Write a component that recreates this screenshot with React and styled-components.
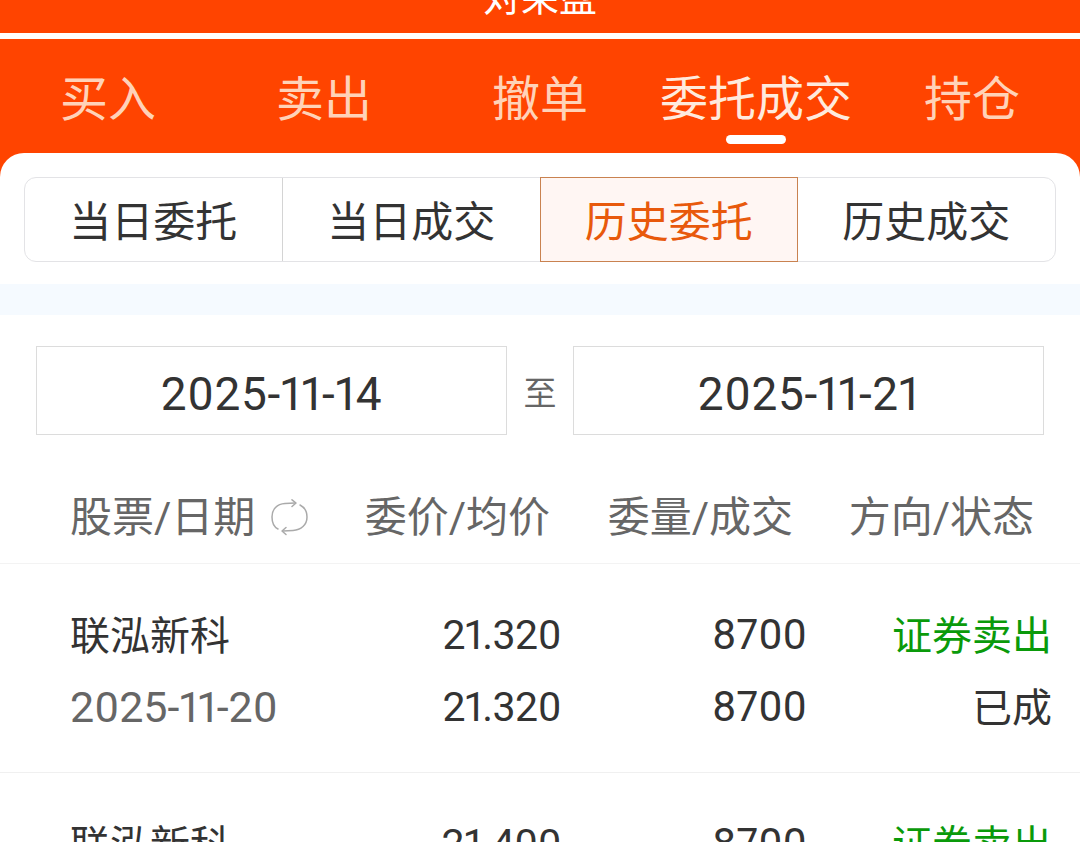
import React from "react";
import styled, { createGlobalStyle } from "styled-components";

const Global = createGlobalStyle`
  html, body { margin: 0; padding: 0; background: #fff; }
  body { width: 1080px; height: 842px; overflow: hidden; font-family: Roboto, "Noto Sans CJK SC", sans-serif; font-variant-numeric: proportional-nums; }
`;
const Page = styled.div`width:1080px;height:842px;overflow:hidden;background:#fff;`;
const TopBar = styled.div`
  height: 33px; background: #ff4400; overflow: hidden; display: flex; justify-content: center; align-items: flex-end;
`;
const TopTitle = styled.div`color:#fff;font-size:38px;line-height:50px;margin-bottom:10px;flex:none;`;
const Stripe = styled.div`height: 6px; background: #fff;`;
const Head = styled.div`background:#ff4400;height:114px;display:flex;`;
const Tab = styled.div`
  position: relative; width: 216px; text-align: center; font-size: 48px; line-height: 60px; padding-top: 31px;
  color: ${p => p.$active ? "#ffeadd" : "#ffd2b8"};
  flex: none;
`;
const TabMark = styled.span`
  position:absolute; left: 78px; top: 96px; width: 60px; height: 9px; border-radius: 5px; background:#fff;
`;
const Panel = styled.div`
  background:#fff; border-radius: 24px 24px 0 0; position: relative; padding-top: 24px;
`;
const HeadBg = styled.div`background:#ff4400;`;
const Seg = styled.div`
  margin: 0 24px; height: 85px; box-sizing: border-box; border: 1px solid #e3e3e6; border-radius: 12px; display: grid; grid-template-columns: repeat(4, 1fr);
`;
const SegItem = styled.div`
  display:flex;align-items:center;justify-content:center;font-size:42px;padding-bottom:2px;
  color: ${p => p.$active ? "#e8590c" : "#333"};
  background: ${p => p.$active ? "#fff6f3" : "transparent"};
  box-shadow: ${p => p.$active ? "inset 0 0 0 1px #c98250" : "none"};
  border-right: ${p => p.$divider ? "1px solid #d4d4d4" : "none"};
  margin: ${p => p.$active ? "-1px 0" : "0"};
`;
const Band = styled.div`height: 31px; background:#f5faff; margin-top: 22px;`;
const DateRow = styled.div`display:flex;align-items:center;padding:0 36px;margin-top:31px;`;
const DateBox = styled.div`
  width:471px;height:89px;box-sizing:border-box;border:1px solid #dcdcdc;display:flex;align-items:center;justify-content:center;
  padding-top: 6px; font-size:46px;letter-spacing:.6px;color:#333;flex:none;
`;
const To = styled.div`flex:1;text-align:center;font-size:33px;color:#666;`;
const Grid = styled.div`display:grid;grid-template-columns:70px 301px 190px 246px 245px 28px;`;
const TableHead = styled(Grid)`
  height: 129px; box-sizing:border-box; padding-top: 37px; border-bottom: 1px solid #f3f3f3;
  font-size: 42px; line-height: 62px; color:#666;
`;
const HeadCell = styled.div`
  grid-column: ${p => p.$col}; white-space: nowrap; display:flex; align-items:center;
  justify-content: ${p => p.$left ? "flex-start" : "flex-end"}; margin-right: ${p => p.$mr || 0}px;
`;
const RefreshSvg = styled.svg`margin-left: 16px; color:#aaa; flex:none;`;
const Row = styled(Grid)`
  height: 209px; box-sizing:border-box; padding-top: 36px; border-bottom:1px solid #f0f0f0;
  grid-template-rows: 72px 72px; align-content:start;
`;
const Cell = styled.div`
  grid-column: ${p => p.$col}; font-size: 40px; line-height:73px; white-space:nowrap;
  text-align: right;
  color: ${p => p.$color || "#333"};
`;
const Name = styled(Cell)`text-align:left;`;
const RowDate = styled(Cell)`text-align:left;font-size:43px;line-height:70px;color:#666;`;
const Price = styled(Cell)`font-size:41px;letter-spacing:-.5px;line-height:70px;`;
const Qty = styled(Cell)`font-size:42px;line-height:70px;`;

const tabs = ["买入","卖出","撤单","委托成交","持仓"];
const segs = ["当日委托","当日成交","历史委托","历史成交"];
const rows = [
  { name:"联泓新科", date:"2025-11-20", p1:"21.320", p2:"21.320", q1:"8700", q2:"8700" },
  { name:"联泓新科", date:"2025-11-20", p1:"21.400", p2:"21.400", q1:"8700", q2:"8700" },
];

export default function App(){
  return <Page>
    <Global/>
    <TopBar><TopTitle>对呆盘</TopTitle></TopBar>
    <Stripe/>
    <HeadBg>
      <Head>{tabs.map((t,i)=><Tab key={t} $active={i===3}>{t}{i===3&&<TabMark/>}</Tab>)}</Head>
      <Panel>
        <Seg>{segs.map((s,i)=><SegItem key={s} $active={i===2} $divider={i===0}>{s}</SegItem>)}</Seg>
        <Band/>
        <DateRow><DateBox>2025-11-14</DateBox><To>至</To><DateBox>2025-11-21</DateBox></DateRow>
        <TableHead>
          <HeadCell $col={2} $left>股票/日期
            <RefreshSvg width="37" height="37" viewBox="0 0 37 37" fill="none" stroke="currentColor" strokeWidth="1.5" strokeLinecap="round" strokeLinejoin="round">
              <path d="M7 30C3 28 1 24 1 18C1 10 6 5 14 4.5L24 4" />
              <path d="M21 0.8L25 4L21 7.5" />
              <path d="M29 6C33 8 36 12 36 18C36 26 30 31 22 31.5L12 32" />
              <path d="M15 28.5L11 32L15 35.5" />
            </RefreshSvg>
          </HeadCell>
          <HeadCell $col={3} $mr={11}>委价/均价</HeadCell>
          <HeadCell $col={4} $mr={14}>委量/成交</HeadCell>
          <HeadCell $col={5} $mr={18}>方向/状态</HeadCell>
        </TableHead>
        {rows.map((r,i)=><Row key={i}>
          <Name $col={2}>{r.name}</Name>
          <Price $col={3}>{r.p1}</Price>
          <Qty $col={4}>{r.q1}</Qty>
          <Cell $col={5} $color="#0a9a0a">证券卖出</Cell>
          <RowDate $col={2}>{r.date}</RowDate>
          <Price $col={3}>{r.p2}</Price>
          <Qty $col={4}>{r.q2}</Qty>
          <Cell $col={5}>已成</Cell>
        </Row>)}
      </Panel>
    </HeadBg>
  </Page>;
}
